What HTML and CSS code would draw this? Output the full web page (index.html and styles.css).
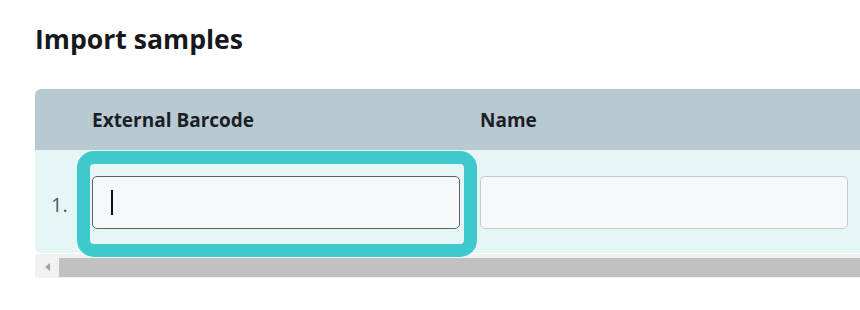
FILE: index.html
```html
<!DOCTYPE html>
<html lang="en">
<head>
<meta charset="utf-8">
<title>Import samples</title>
<link rel="stylesheet" href="styles.css">
</head>
<body>
<main class="page">
  <h1 class="title">Import samples</h1>
  <section class="scroller">
    <div class="table">
      <div class="row head">
        <div class="cell idx"></div>
        <div class="cell col">External Barcode</div>
        <div class="cell col">Name</div>
      </div>
      <div class="row body">
        <div class="cell idx">1.</div>
        <div class="cell col"><div class="field focused"><span class="caret"></span></div></div>
        <div class="cell col"><div class="field"></div></div>
      </div>
    </div>
    <div class="scrollbar">
      <div class="arrow"><span class="tri"></span></div>
      <div class="thumb"></div>
    </div>
    <div class="highlight"></div>
  </section>
</main>
</body>
</html>
```

FILE: styles.css
```css
html, body {
  margin: 0;
  padding: 0;
  overflow: hidden;
  background: #ffffff;
}
.page {
  font-family: "Open Sans", "Noto Sans", sans-serif;
  color: #1b1e24;
  padding: 21px 0 0 35px;
}
.title {
  margin: 0;
  font-size: 26.6px;
  line-height: 36px;
  font-weight: 700;
  color: #16181d;
}
.scroller {
  position: relative;
  margin-top: 32px;
  overflow: hidden;
}
.table {
  width: 1000px;
  border-radius: 6px 6px 0 6px;
  overflow: hidden;
}
.row {
  display: grid;
  grid-template-columns: 57px 388px 388px 1fr;
}
.row.head {
  height: 61px;
  background: #b9c9d1;
  align-items: center;
  font-weight: 700;
  font-size: 19px;
  color: #1a1f26;
}
.row.body {
  height: 103px;
  background: #e6f5f6;
  align-items: center;
}
.cell.idx {
  font-size: 20px;
  color: #53585c;
  padding-left: 16px;
  padding-top: 6px;
}
.cell.col {
  padding-right: 20px;
}
.row.body .cell.col {
  padding-top: 2px;
}
.field {
  box-sizing: border-box;
  height: 53px;
  border: 1px solid #c7cacd;
  border-radius: 5px;
  background: #f7f8fa;
  display: flex;
  align-items: center;
  padding-left: 18px;
}
.field.focused {
  border: 1.5px solid #5d6064;
}
.caret {
  width: 2px;
  height: 25px;
  background: #111111;
}
.scrollbar {
  display: flex;
  height: 24px;
  background: #f1f1f1;
  margin-top: 1px;
}
.arrow {
  width: 24px;
  display: flex;
  align-items: center;
  justify-content: center;
}
.tri {
  width: 0;
  height: 0;
  border-top: 4px solid transparent;
  border-bottom: 4px solid transparent;
  border-right: 5px solid #a3a3a3;
  margin-top: 2px;
}
.thumb {
  flex: 1;
  margin: 4px 0 1px 0;
  background: #c1c1c1;
}
.highlight {
  position: absolute;
  left: 42px;
  top: 62px;
  width: 400px;
  height: 106px;
  box-sizing: border-box;
  border: 13px solid #3ecacd;
  border-radius: 17px;
}
```
